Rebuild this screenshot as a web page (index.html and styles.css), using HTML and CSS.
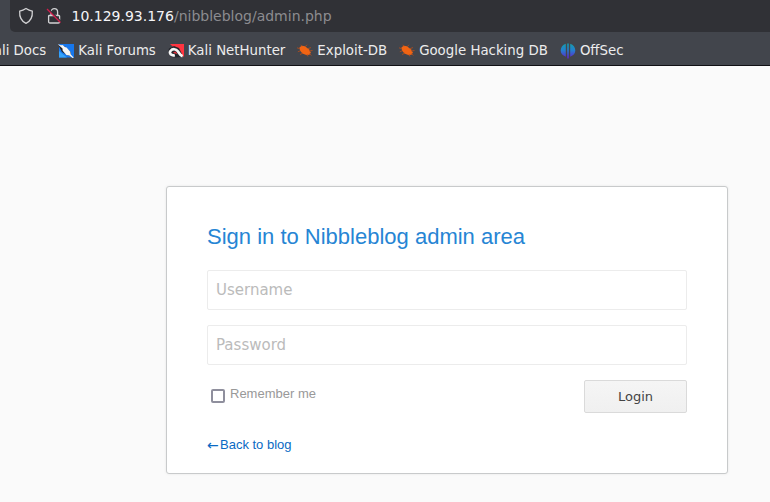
FILE: index.html
```html
<!DOCTYPE html>
<html lang="en">
<head>
<meta charset="utf-8">
<title>Nibbleblog admin</title>
<link rel="stylesheet" href="styles.css">
</head>
<body>
<header class="browser">
  <div class="address">
    <svg class="shield" width="16" height="18" viewBox="0 0 16 18"><path d="M8 1.5 Q11 3.4 14.3 4.2 C14.7 10 12.6 14.1 8 16.3 C3.4 14.1 1.3 10 1.7 4.2 Q5 3.4 8 1.5Z"/></svg>
    <svg class="lock" width="16" height="18" viewBox="0 0 16 18"><path d="M5 8.5V5a3.3 3.3 0 0 1 6.6 0v3.5M3.4 8.5h9.4a.8.8 0 0 1 .8.8v5.4a1.3 1.3 0 0 1-1.3 1.3H3.9a1.3 1.3 0 0 1-1.3-1.3V9.3a.8.8 0 0 1 .8-.8Z"/><path class="gap" d="M2 1.5 15.5 15"/><path class="slash" d="M1 2 14.5 15.5"/></svg>
    <span class="url"><b>10.129.93.176</b>/nibbleblog/admin.php</span>
  </div>
  <nav class="bookmarks">
    <a class="clipped">Kali Docs</a>
    <a><svg width="16" height="16" viewBox="0 0 16 16"><path fill="#1677ee" d="M1 1h15v13.5H1z"/><path fill="#36a3fa" d="M1 8l8 6.5H1z"/><path fill="#20232a" d="M0 1.5 7 3.5l6 6v3h-3L4 9z"/><path fill="#f5f5f5" d="M-.5 1 3 2.2l1.5-.2L7 4.1l1.6.4 3.7 4.2.5 2.7 3 3.4-1.2.3-3.2-2.7-3-.5-3.7-4.2-.2-2.3z"/></svg>Kali Forums</a>
    <a><svg width="16" height="16" viewBox="0 0 16 16"><path fill="#ff3440" d="M2 1h14v13z"/><path fill="#24262c" d="M1 5.5 6 3l5 2 3 6-1 3-5 .5-5-.5-3-4z"/><path fill="none" stroke="#f7f7f7" stroke-width="2.7" d="M6.8 12.1C3.3 13 .8 10.3 2.5 8c2-2.5 5.5-2.3 7.3.2 1.4 2 1.8 3.8 4.8 5"/><path fill="#e22e3a" d="m4.8 9.2 3-.8 1.4 2.8-2.2-.6z"/></svg>Kali NetHunter</a>
    <a><svg width="16" height="16" viewBox="0 0 16 16"><use href="#bug"/></svg>Exploit-DB</a>
    <a><svg width="16" height="16" viewBox="0 0 16 16"><g id="bug"><path fill="#f16413" d="M2.5 4.3 5 2.8l3 .5 3.8 3 1.9 3-.8 2.3-3 .6-4.5-1.8L3 7.5z"/><path fill="none" stroke="#b94e1b" stroke-width=".8" d="M3 5.8 0 4.8M3.5 7.7.8 8.8M5 3.3 3.8 1.8M8 3.8l2-2M11 5.6l3-1M12 8l3.5-.5M10 11l1 2.5M6 10l-3 1.5M12.5 10.5l1.8 2"/></g></svg>Google Hacking DB</a>
    <a><svg width="16" height="16" viewBox="0 0 16 16"><defs><linearGradient id="off" x2="0" y2="1"><stop stop-color="#159da9"/><stop offset=".45" stop-color="#237fd0"/><stop offset="1" stop-color="#6320cc"/></linearGradient></defs><path fill="url(#off)" d="M5.8.7v13Q.7 11.5.7 7.4.9 2.5 5.8.7ZM10.2.7Q15.1 2.5 15.3 7.4q0 4.1-5.1 6.3ZM7.2.5h1.6v15H7.2z"/></svg>OffSec</a>
  </nav>
</header>
<main>
  <form class="card">
    <h1>Sign in to Nibbleblog admin area</h1>
    <input class="field" type="text" placeholder="Username">
    <input class="field" type="password" placeholder="Password">
    <div class="actions">
      <label><input class="check" type="checkbox">Remember me</label>
      <button type="button">Login</button>
    </div>
    <a class="back"><span class="arrow">←</span>Back to blog</a>
  </form>
</main>
</body>
</html>
```
FILE: styles.css
```css
* { box-sizing: border-box; }
body { margin: 0; height: 502px; overflow: hidden; background: #fafafa; font-family: "Liberation Sans", sans-serif; }
.browser { height: 66px; background: #42454c; border-bottom: 1px solid #101014; font-family: "DejaVu Sans", sans-serif; color: #ececec; }
.address { height: 32px; margin-left: 10px; padding-left: 8px; background: #303136; border-radius: 0 0 0 5px; display: flex; align-items: center; }
.address svg { fill: none; stroke: #d2d2d4; stroke-width: 1.3; flex: none; }
.address .lock { margin-left: 12px; }
.address .gap { stroke: #303136; stroke-width: 1.5; }
.address .slash { stroke: #d51c4c; stroke-width: 1.3; }
.url { margin-left: 9.5px; font-size: 14px; line-height: 32px; color: #8c8c90; white-space: nowrap; }
.url b { font-weight: 400; color: #f5f5f8; }
.bookmarks { height: 33px; padding-top: 3px; display: flex; gap: 12px; font-size: 13.33px; white-space: nowrap; }
.bookmarks a { display: flex; align-items: center; gap: 4.3px; margin-right: -.3px; }
.bookmarks svg { flex: none; margin-top: 1px; }
.bookmarks .clipped { width: 46.3px; justify-content: flex-end; overflow: hidden; }
main { display: flex; }
.card { width: 562px; height: 288px; margin: 120px 0 0 166px; padding: 35px 40px 0; background: #fff; border: 1px solid #c8cacb; border-radius: 3px; box-shadow: 0 0 3px rgba(0,0,0,.08); }
h1 { margin: 0 0 18px; font-size: 22px; line-height: 30px; font-weight: 400; color: #2685d4; white-space: nowrap; }
.field { display: block; width: 480px; height: 40px; margin: 0 0 15px; padding: 0 8px; border: 1px solid #ececec; border-radius: 2px; background: #fff; font: 15px "DejaVu Sans", sans-serif; }
.field::placeholder { color: #bbb; opacity: 1; }
.actions { display: flex; justify-content: space-between; height: 33px; }
label { display: flex; align-items: flex-start; font-size: 13px; line-height: 27px; color: #999; }
.check { appearance: none; width: 14px; height: 14px; margin: 9px 5px 0 4px; border: 2px solid #8f8f9d; border-radius: 2px; background: #fff; }
button { width: 103px; height: 33px; padding: 0; border: 1px solid #dadada; border-radius: 2px; background: linear-gradient(#f5f5f5, #f0f0f0); color: #444; font: 13px "DejaVu Sans", sans-serif; }
.back { display: flex; margin-top: 22px; font-size: 13px; line-height: 20px; color: #0a6ac4; }
.arrow { width: 13px; font-family: "DejaVu Sans", sans-serif; font-size: 14px; }
```
